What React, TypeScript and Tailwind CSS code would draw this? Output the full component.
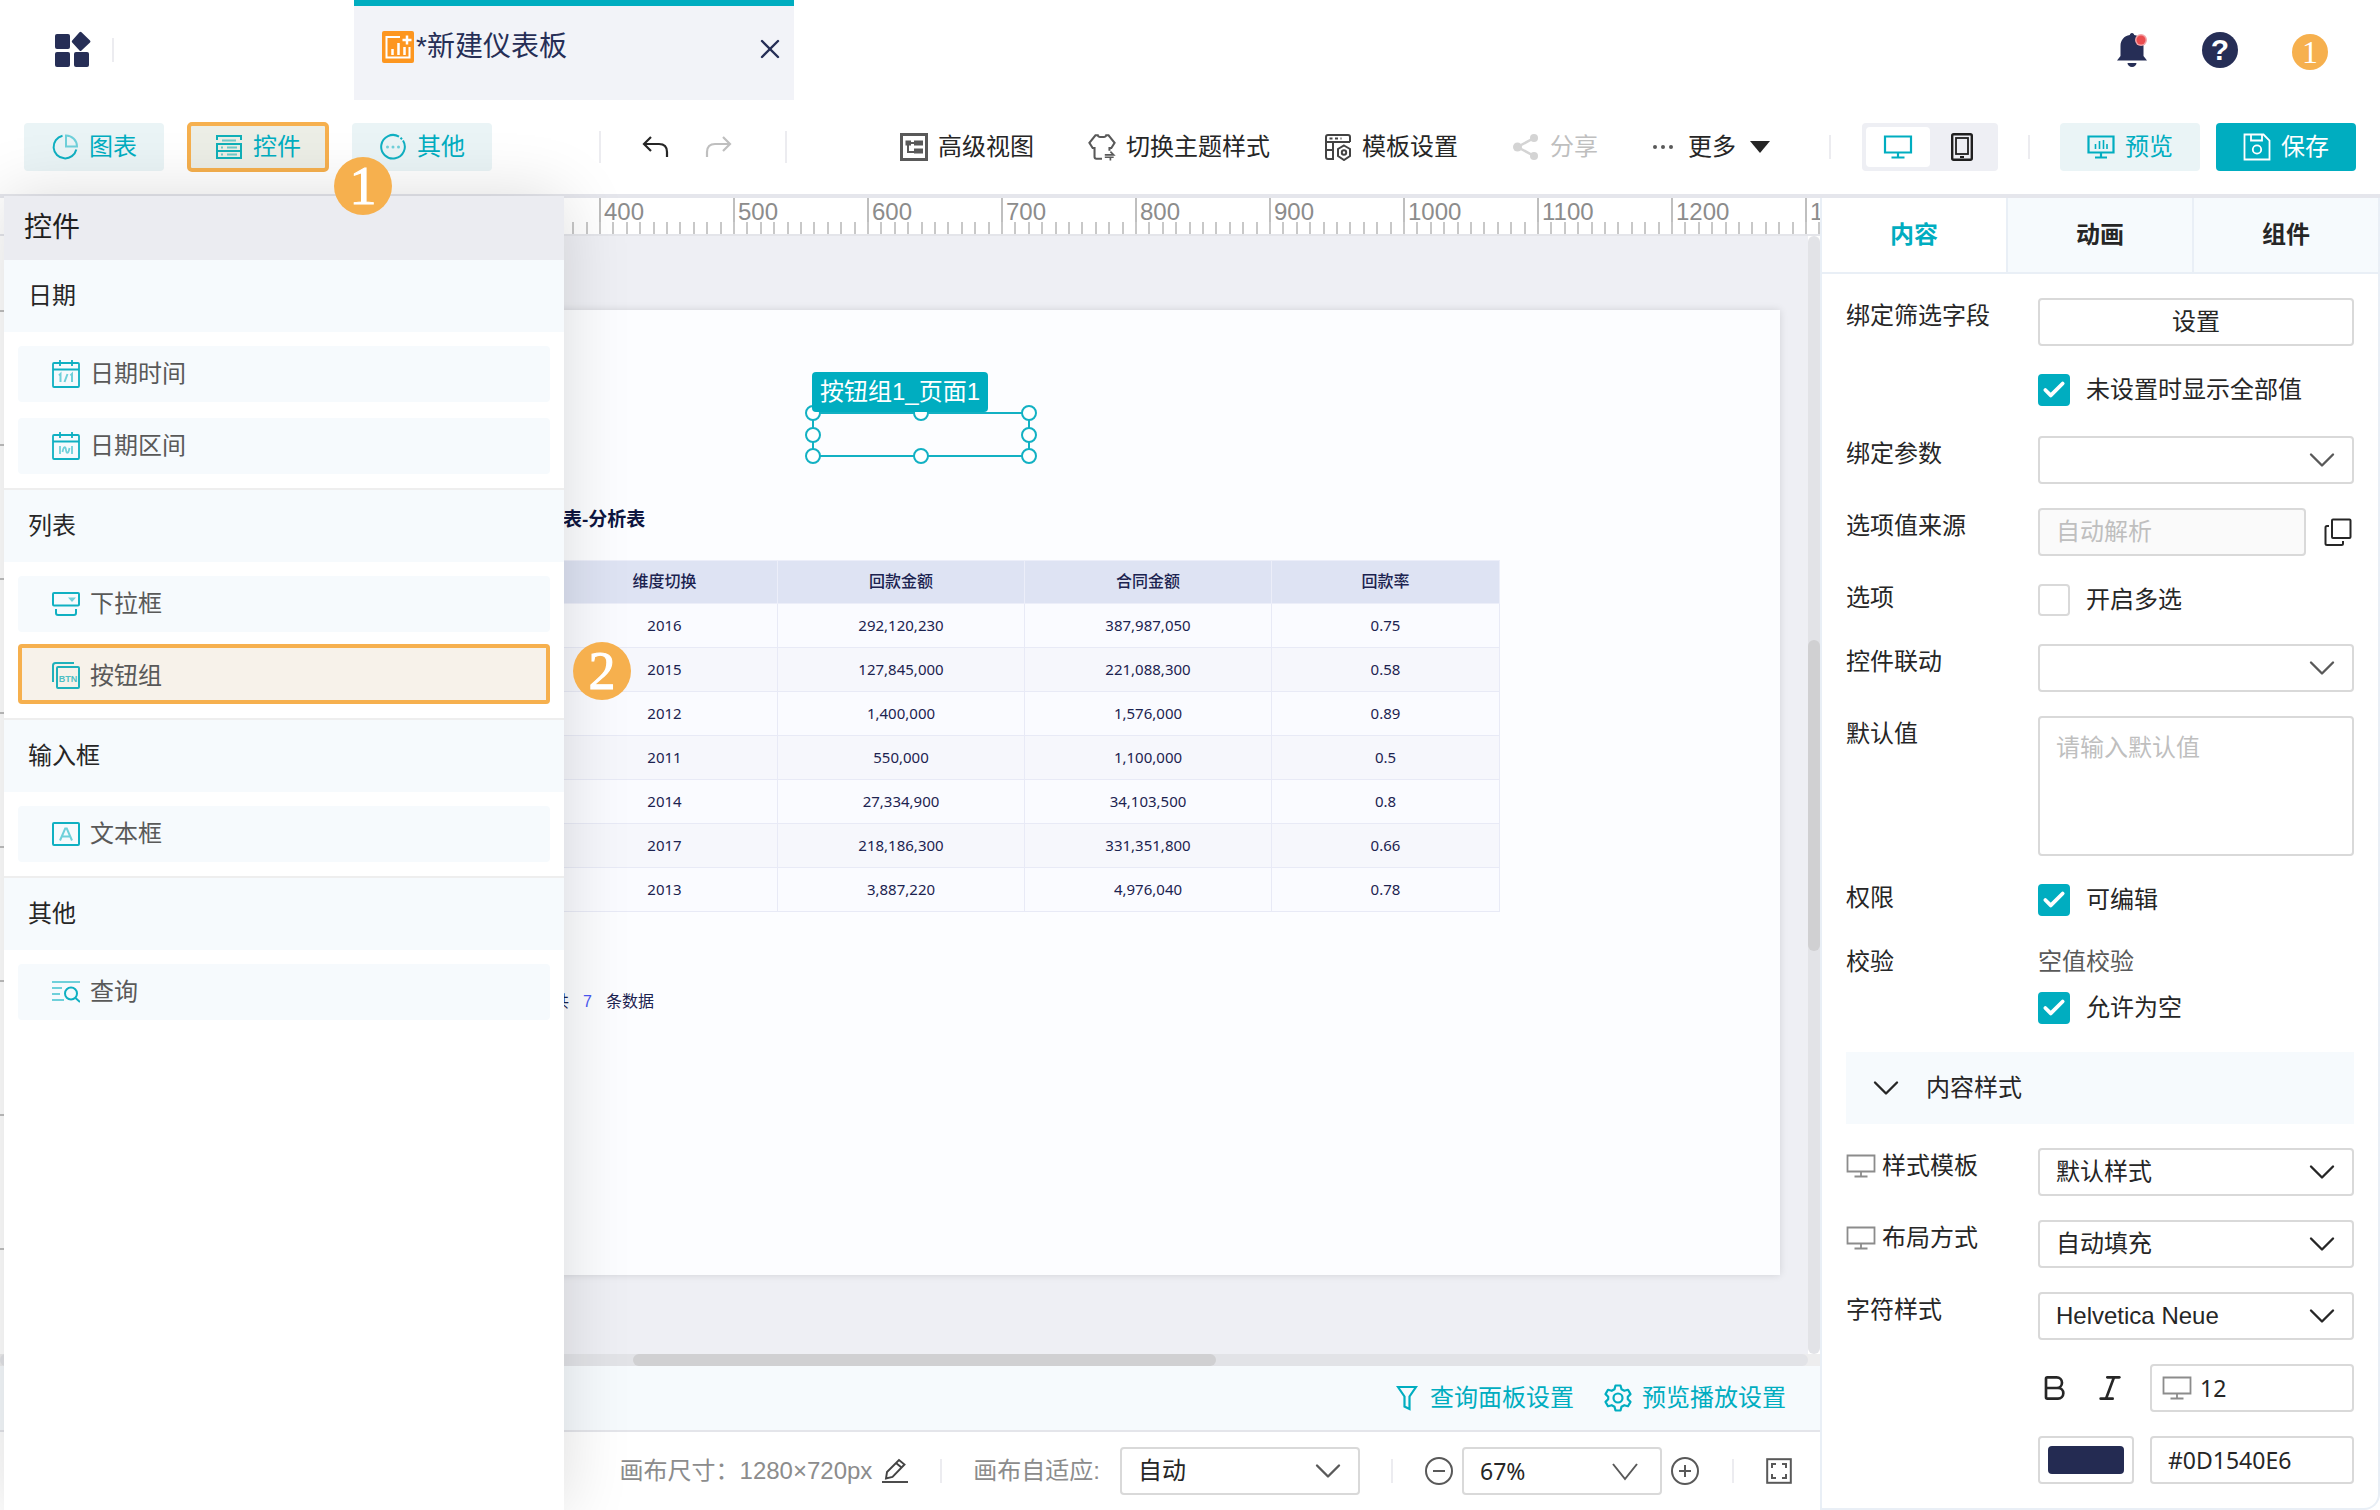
import { useState } from "react";
import type { ReactNode } from "react";
import { Bold, Check, ChevronDown, Italic, X } from "lucide-react";

const RULER_MARKS = [400, 500, 600, 700, 800, 900, 1000, 1100, 1200, 1300];
const SIDE_MARKS = [0, 100, 200, 300, 400, 500, 600, 700, 800];
const TICKS = [0, 1, 2, 3, 4, 5, 6, 7, 8, 9];

const COLUMNS = ["维度切换", "回款金额", "合同金额", "回款率"];

const ROWS = [
  ["2016", "292,120,230", "387,987,050", "0.75"],
  ["2015", "127,845,000", "221,088,300", "0.58"],
  ["2012", "1,400,000", "1,576,000", "0.89"],
  ["2011", "550,000", "1,100,000", "0.5"],
  ["2014", "27,334,900", "34,103,500", "0.8"],
  ["2017", "218,186,300", "331,351,800", "0.66"],
  ["2013", "3,887,220", "4,976,040", "0.78"],
];

const TABS = ["内容", "动画", "组件"];

/* ---------- icons ---------- */

function LogoIcon() {
  return (
    <svg width="38" height="38" viewBox="0 0 38 38" fill="#262e56">
      <rect x="1" y="3" width="15" height="15" rx="2" />
      <path d="M27.500 1.200 36 9.400q1 1 0 2L27.500 19.500q-1 1-2 0L18.200 11.400q-1-1 0-2L25.500 1.200q1-1 2 0Z" />
      <rect x="1" y="21" width="15" height="15" rx="2" />
      <rect x="20" y="21" width="15" height="15" rx="2" />
    </svg>
  );
}

function DashboardIcon() {
  return (
    <svg width="32" height="32" viewBox="0 0 32 32" fill="none">
      <rect width="32" height="32" rx="2" fill="#fd9620" />
      <path d="M18 6H4.500v20.500h23V16" stroke="#fff" strokeWidth="2" />
      <path d="M10.500 18v6M16.500 12v12M22.500 16v8" stroke="#fff" strokeWidth="2.500" />
      <path d="M25 4.500v9M20.500 9h9" stroke="#fff" strokeWidth="2.500" />
    </svg>
  );
}

function BellIcon() {
  return (
    <svg width="32" height="36" viewBox="0 0 32 36">
      <path d="M16 1c1.500 0 2 1 2.200 2C24 4 27.500 8 27.500 14v10l3.500 4.500H1L4.500 24V14C4.500 8 8 4 13.800 3c.2-1 .7-2 2.200-2Z" fill="#262e56" />
      <path d="M11.500 31h9a4.500 4 0 0 1-9 0Z" fill="#262e56" />
      <circle cx="25" cy="8" r="6" fill="#f3a3a6" />
      <circle cx="25" cy="8" r="4.500" fill="#ea4d4f" />
    </svg>
  );
}

function PieIcon() {
  return (
    <svg width="28" height="28" viewBox="0 0 28 28" fill="none" strokeWidth="2">
      <path d="M11.500 2.700A11.500 11.500 0 1 0 25.300 16.500" stroke="#10b0c2" />
      <path d="M15 2.500v11h11A11 11 0 0 0 15 2.500Z" stroke="#6fd0da" />
    </svg>
  );
}

function ControlIcon() {
  return (
    <svg width="28" height="28" viewBox="0 0 28 28" fill="none" strokeWidth="2">
      <path d="M2 7V3h24v4" stroke="#10b0b8" />
      <path d="M7 7.500h14" stroke="#6fc9c8" />
      <rect x="2" y="11" width="24" height="7" stroke="#10b0b8" />
      <path d="M2 18v7h24v-7" stroke="#10b0b8" />
      <path d="M6 14.500h2M12 14.500h10M6 21.500h2M12 21.500h10" stroke="#6fc9c8" />
    </svg>
  );
}

function OtherIcon() {
  return (
    <svg width="28" height="28" viewBox="0 0 28 28" fill="none">
      <path d="M24 7.500A11.800 11.800 0 1 1 20 3.600M21.500 4.800l1.500 1.500" stroke="#10b0c2" strokeWidth="2" />
      <circle cx="8.500" cy="14" r="1.500" fill="#6fd0da" />
      <circle cx="14" cy="14" r="1.500" fill="#6fd0da" />
      <circle cx="19.500" cy="14" r="1.500" fill="#6fd0da" />
    </svg>
  );
}

function UndoIcon({ flipped = false }: { flipped?: boolean }) {
  return (
    <svg width="28" height="24" viewBox="0 0 28 24" fill="none" stroke={flipped ? "#bfbfbf" : "#262626"} strokeWidth="2.200">
      {flipped ? <path d="M18 2l7 7-7 7M25 9H10C5 9 2 12 2 17v5" /> : <path d="M10 2 3 9l7 7M3 9h15c5 0 8 3 8 8v5" />}
    </svg>
  );
}

function AdvancedViewIcon() {
  return (
    <svg width="28" height="28" viewBox="0 0 28 28" fill="none">
      <rect x="1.500" y="1.500" width="25" height="25" stroke="#595959" strokeWidth="3" />
      <path d="M8 9v10h8M8 10h8" stroke="#595959" strokeWidth="2" />
      <path d="M5.500 7.500h5.500v5H5.500zM14 7.500h9v5h-9zM14 15.500h9v5h-9z" fill="#595959" />
    </svg>
  );
}

function ThemeIcon() {
  return (
    <svg width="28" height="28" viewBox="0 0 30 30" fill="none" stroke="#595959" strokeWidth="2.200">
      <path d="M15 27.500H9q-2 0-2-2V16H5L1.500 10.500 8 2.500h2.500c.5 2.500 8.500 2.500 9 0H22l6.500 8L25 16h-2v3" />
      <path d="M18 23.500h9.500L24 20M27.500 26h-9.500M24 26v3.500" strokeWidth="1.800" />
    </svg>
  );
}

function TemplateIcon() {
  return (
    <svg width="28" height="28" viewBox="0 0 28 28" fill="none" stroke="#434343" strokeWidth="2">
      <path d="M26 9V4q0-2-2-2H4Q2 2 2 4v20q0 2 2 2h6M2 9h24M9 9v17M2 17h8" />
      <path d="M5.500 5.500h3M11 5.500h3M16.500 5.500h1" />
      <path d="M20 12.500 26 16v7l-6 4-6-4v-7Z" />
      <circle cx="20" cy="19.500" r="2.200" />
    </svg>
  );
}

function ShareIcon() {
  return (
    <svg width="28" height="28" viewBox="0 0 28 28" fill="#d4d4d4">
      <circle cx="5.500" cy="14" r="4.500" />
      <circle cx="22" cy="5" r="4" />
      <circle cx="22" cy="23" r="4" />
      <path d="M22 5 5.500 14 22 23" fill="none" stroke="#d4d4d4" strokeWidth="2.500" />
    </svg>
  );
}

function DotsIcon() {
  return (
    <svg width="22" height="8" viewBox="0 0 22 8" fill="#595959">
      <circle cx="3" cy="4" r="2" />
      <circle cx="11" cy="4" r="2" />
      <circle cx="19" cy="4" r="2" />
    </svg>
  );
}

function MonitorIcon() {
  return (
    <svg width="30" height="26" viewBox="0 0 30 26" fill="none" stroke="#00adc0" strokeWidth="2.200">
      <path d="M2 2.500h26v16H2zM15 19v4M8.500 23.500h13" />
    </svg>
  );
}

function PhoneIcon() {
  return (
    <svg width="22" height="28" viewBox="0 0 22 28" fill="none" stroke="#1f1f1f">
      <rect x="1.200" y="1.200" width="19.600" height="25.600" rx="1.500" strokeWidth="2.400" />
      <rect x="5" y="5" width="12" height="16" strokeWidth="1.800" />
      <path d="M9 24h4" strokeWidth="2" />
    </svg>
  );
}

function PreviewIcon() {
  return (
    <svg width="28" height="26" viewBox="0 0 28 26" fill="none" stroke="#00adc0" strokeWidth="2.200">
      <path d="M1.500 2.500h25v16h-25zM14 19v4M8 23.500h12" />
      <path d="M8.500 10v5M12.500 7v8M16.500 6v9M20 10v5" strokeWidth="1.600" />
    </svg>
  );
}

function SaveIcon() {
  return (
    <svg width="28" height="28" viewBox="0 0 28 28" fill="none" stroke="#fff" strokeWidth="1.800">
      <path d="M1.500 1.500h19l6 6v19h-25Z" />
      <path d="M8 1.500v6h11v-6" />
      <circle cx="14" cy="16.500" r="4.200" />
    </svg>
  );
}

function CalendarIcon({ range = false }: { range?: boolean }) {
  return (
    <svg width="28" height="28" viewBox="0 0 28 28" fill="none" stroke="#10b0c2" strokeWidth="1.800">
      <rect x="1" y="3" width="26" height="24" rx="1" />
      <path d="M1 9.500h26M8 0v6M20 0v6" />
      {range ? (
        <path d="M8 14v8M20 14v8M10.500 20c1-6 3-6 3.500-2s2.500 4 3.500-2" stroke="#6fd0da" strokeWidth="1.800" />
      ) : (
        <path d="M7 15.500l1.500-1.500v8M18.500 15.500l1.500-1.500v8M15.500 14l-3 8" stroke="#6fd0da" strokeWidth="2" />
      )}
    </svg>
  );
}

function DropdownIcon() {
  return (
    <svg width="28" height="28" viewBox="0 0 28 28" fill="none" stroke="#10b0c2" strokeWidth="2">
      <rect x="1" y="3" width="26" height="12.500" rx="1" />
      <path d="M4 19v4q0 2 2 2h16q2 0 2-2v-4" />
      <path d="M16 7.500h8l-4 4.500Z" fill="#6fd0da" stroke="none" />
    </svg>
  );
}

function ButtonGroupIcon() {
  return (
    <svg width="28" height="28" viewBox="0 0 28 28" fill="none" stroke="#1fb1bb" strokeWidth="2">
      <path d="M1 20V3.500Q1 1 3.500 1H22" />
      <rect x="5" y="5" width="22" height="21" rx="1" />
      <text x="16" y="19.500" textAnchor="middle" fontSize="9" fontWeight="700" fontFamily="Liberation Sans, sans-serif" fill="#4fbfc4" stroke="none">
        BTN
      </text>
    </svg>
  );
}

function TextBoxIcon() {
  return (
    <svg width="28" height="28" viewBox="0 0 28 28" fill="none" stroke="#10b0c2" strokeWidth="2">
      <rect x="1" y="3" width="26" height="22" rx="1" />
      <path d="M8 20.500 13.200 8.500h1.600L20 20.500M9.800 16.500h8.400" stroke="#6fd0da" />
    </svg>
  );
}

function QueryIcon() {
  return (
    <svg width="28" height="28" viewBox="0 0 28 28" fill="none" strokeWidth="2">
      <path d="M0 4h28M0 10h10M0 16h8M0 22h12" stroke="#6fd0da" />
      <circle cx="19" cy="15.500" r="6" stroke="#10b0c2" />
      <path d="M23.500 20 28 24" stroke="#10b0c2" />
    </svg>
  );
}

function SmallMonitorIcon() {
  return (
    <svg width="30" height="24" viewBox="0 0 30 24" fill="none" stroke="#8c8c8c" strokeWidth="1.800" className="shrink-0">
      <path d="M1.500 1.500h27v16h-27zM15 18v4M8.500 22.500h13" />
    </svg>
  );
}

function CopyIcon() {
  return (
    <svg width="28" height="28" viewBox="0 0 28 28" fill="none" stroke="#262626" strokeWidth="2">
      <rect x="8" y="1.500" width="18.500" height="18.500" rx="1" />
      <path d="M5 8H3q-1.500 0-1.500 1.500v16Q1.500 27 3 27h14.500q1.500 0 1.500-1.500V23" />
    </svg>
  );
}

function FilterIcon() {
  return (
    <svg width="22" height="26" viewBox="0 0 22 26" fill="none" stroke="#00adc0" strokeWidth="2.200">
      <path d="M2 2h18l-6.500 9.500V24l-5-2.500v-10Z" />
    </svg>
  );
}

function GearIcon() {
  return (
    <svg width="28" height="28" viewBox="0 0 28 28" fill="none" stroke="#00adc0" strokeWidth="2.200">
      <path d="M11.500 1.500h5l1 3.700 2.800 1.600 3.700-1 2.500 4.300-2.700 2.700v2.400l2.700 2.700-2.500 4.300-3.700-1-2.800 1.600-1 3.700h-5l-1-3.700-2.800-1.600-3.700 1-2.500-4.300 2.700-2.700v-2.400L1.500 10.100 4 5.800l3.700 1 2.800-1.600Z" strokeLinejoin="round" />
      <circle cx="14" cy="14" r="4.500" />
    </svg>
  );
}

function PencilIcon() {
  return (
    <svg width="26" height="26" viewBox="0 0 26 26" fill="none" stroke="#434343" strokeWidth="1.900">
      <path d="M4 20.500 5 14 17 2l5.500 4.500L10.500 19ZM14 5l5.500 4.500" />
      <path d="M0 24h26" />
    </svg>
  );
}

function ZoomIcon({ plus = false }: { plus?: boolean }) {
  return (
    <svg width="30" height="30" viewBox="0 0 30 30" fill="none" stroke="#595959" strokeWidth="2">
      <circle cx="15" cy="15" r="13" />
      <path d={plus ? "M9 15h12M15 9v12" : "M9 15h12"} />
    </svg>
  );
}

function FullscreenIcon() {
  return (
    <svg width="26" height="26" viewBox="0 0 26 26" fill="none" stroke="#595959" strokeWidth="2">
      <rect x="1.200" y="1.200" width="23.600" height="23.600" />
      <path d="M6 10V6h4M16 6h4v4M20 16v4h-4M10 20H6v-4" />
    </svg>
  );
}

/* ---------- small parts ---------- */

function StepBadge({ n, className }: { n: number; className: string }) {
  return (
    <span
      className={`absolute z-30 flex h-[58px] w-[58px] items-center justify-center rounded-full bg-[#f6b04e] font-['Liberation_Serif',serif] text-[54px] leading-none text-white [-webkit-text-stroke:1px_white] ${className}`}
    >
      {n}
    </span>
  );
}

function Divider() {
  return <span className="h-6 w-0.5 bg-[#ececf0]" />;
}

function VeeIcon() {
  return (
    <svg width="26" height="18" viewBox="0 0 26 18" fill="none" stroke="#595959" strokeWidth="2" className="pointer-events-none absolute top-4 right-6">
      <path d="M1 1l12 15L25 1" />
    </svg>
  );
}

type SelectProps = {
  id: string;
  value: string;
  className?: string;
  font?: string;
  label?: string;
  color?: string;
  icon?: ReactNode;
};

function SelectBox({ id, value, className = "w-full", font = "", label, color = "text-[#262626]", icon }: SelectProps) {
  return (
    <div className={`relative h-12 ${className}`}>
      <select
        id={id}
        aria-label={label}
        defaultValue={value}
        className={`h-full w-full appearance-none rounded-sm border-2 border-[#d9d9d9] bg-white px-4 text-[#262626] ${font}`}
      >
        <option value={value}>{value}</option>
      </select>
      {icon ?? <ChevronDown size={44} strokeWidth={1.3} className={`pointer-events-none absolute top-0.5 right-2.5 ${color}`} />}
    </div>
  );
}

function CheckRow({ id, text, checked = false }: { id: string; text: string; checked?: boolean }) {
  const [on, setOn] = useState(checked);
  return (
    <div className="flex h-10 items-center gap-4">
      <span className="relative h-8 w-8">
        <input
          id={id}
          type="checkbox"
          checked={on}
          onChange={(e) => setOn(e.target.checked)}
          className="block h-8 w-8 appearance-none rounded-sm border-2 border-[#d9d9d9] bg-white checked:border-[#00adc0] checked:bg-[#00adc0]"
        />
        {on && <Check size={26} strokeWidth={3.5} className="pointer-events-none absolute top-[3px] left-[3px] text-white" />}
      </span>
      <label htmlFor={id}>{text}</label>
    </div>
  );
}

type FieldProps = { label: string; htmlFor?: string; monitor?: boolean; children: ReactNode };

function Field({ label, htmlFor, monitor = false, children }: FieldProps) {
  return (
    <div className="flex">
      <label htmlFor={htmlFor} className="flex h-9 w-48 shrink-0 items-center gap-1.5">
        {monitor && <SmallMonitorIcon />}
        {label}
      </label>
      <div className="min-w-0 flex-1">{children}</div>
    </div>
  );
}

function ToolButton({ icon, text, color = "text-[#262626]" }: { icon: ReactNode; text: string; color?: string }) {
  return (
    <button className={`flex items-center gap-2.5 whitespace-nowrap ${color}`}>
      {icon}
      {text}
    </button>
  );
}

function AddButton({ icon, text, active = false }: { icon: ReactNode; text: string; active?: boolean }) {
  return (
    <button
      className={`flex h-12 w-[140px] items-center justify-center gap-2.5 rounded-sm text-[#00adc0] ${
        active ? "bg-[#eceee6] outline-4 -outline-offset-3 outline-[#f6b04e]" : "bg-[#eaf4f6]"
      }`}
    >
      {icon}
      {text}
    </button>
  );
}

function WidgetItem({ icon, text, step }: { icon: ReactNode; text: string; step?: number }) {
  return (
    <div className={`relative ${step ? "-mt-1" : ""}`}>
      <button
        className={`flex w-full items-center gap-2.5 rounded px-[34px] text-[#595959] ${
          step ? "h-[60px] bg-[#f7f2ea] pt-1 outline-4 -outline-offset-4 outline-[#f6b04e]" : "h-14 bg-[#f6fafd]"
        }`}
      >
        {icon}
        {text}
      </button>
      {step && <StepBadge n={step} className="-top-0.5 left-[555px]" />}
    </div>
  );
}

function WidgetGroup({ title, first = false, children }: { title: string; first?: boolean; children: ReactNode }) {
  return (
    <section className={first ? "" : "border-t-2 border-[#eeeeee]"}>
      <h3 className="flex h-[72px] items-center bg-[#f6fafd] px-6 text-[#262626]">{title}</h3>
      <div className="flex flex-col gap-4 px-3.5 py-3.5">{children}</div>
    </section>
  );
}

function Handle({ className }: { className: string }) {
  return <span className={`absolute h-4 w-4 rounded-full border-2 border-[#12b1c3] bg-white ${className}`} />;
}

/* ---------- regions ---------- */

function Header() {
  return (
    <header className="flex h-[100px] items-center">
      <div className="flex w-[354px] items-center gap-5 pl-[54px]">
        <LogoIcon />
        <Divider />
      </div>
      <div className="flex h-full w-[440px] items-center gap-0.5 border-t-6 border-[#00adc0] bg-[#f2f3f8] pr-2 pb-3 pl-7">
        <DashboardIcon />
        <span className="text-[28px] text-[#262e56]">*新建仪表板</span>
        <button aria-label="关闭" className="ml-auto pt-1 text-[#262e56]">
          <X size={32} strokeWidth={1.8} />
        </button>
      </div>
      <div className="ml-auto flex items-center gap-[54px] pr-[52px]">
        <button aria-label="通知">
          <BellIcon />
        </button>
        <button aria-label="帮助" className="flex h-9 w-9 items-center justify-center rounded-full bg-[#262e56] text-[30px] leading-none font-bold text-white">
          ?
        </button>
        <span className="mt-1 flex h-9 w-9 items-center justify-center rounded-full bg-[#f6b04e] font-['Liberation_Serif',serif] text-[32px] leading-none text-white">
          1
        </span>
      </div>
    </header>
  );
}

function Toolbar() {
  return (
    <div className="flex h-[94px] items-center px-6">
      <div className="flex gap-6">
        <AddButton icon={<PieIcon />} text="图表" />
        <div className="relative">
          <AddButton icon={<ControlIcon />} text="控件" active />
          <StepBadge n={1} className="top-[34px] left-[146px]" />
        </div>
        <AddButton icon={<OtherIcon />} text="其他" />
      </div>
      <div className="ml-[107px] flex items-center">
        <span className="h-8 w-0.5 bg-[#ececf0]" />
        <button aria-label="撤销" className="ml-10">
          <UndoIcon />
        </button>
        <button aria-label="重做" disabled className="ml-9">
          <UndoIcon flipped />
        </button>
        <span className="ml-[52px] h-8 w-0.5 bg-[#ececf0]" />
      </div>
      <div className="ml-[113px] flex items-center gap-[54px]">
        <ToolButton icon={<AdvancedViewIcon />} text="高级视图" />
        <ToolButton icon={<ThemeIcon />} text="切换主题样式" />
        <ToolButton icon={<TemplateIcon />} text="模板设置" />
        <ToolButton icon={<ShareIcon />} text="分享" color="text-[#bfbfbf]" />
        <button className="flex items-center gap-3.5 whitespace-nowrap text-[#262626]">
          <DotsIcon />
          更多
          <svg width="20" height="12" viewBox="0 0 20 12" fill="#262626">
            <path d="M0 0h20L10 12Z" />
          </svg>
        </button>
      </div>
      <div className="ml-auto flex items-center">
        <Divider />
        <div className="ml-[31px] flex h-12 w-[136px] items-center rounded bg-[#eeeff4] p-1">
          <button aria-label="电脑端" className="flex h-10 w-16 items-center justify-center rounded-sm bg-white">
            <MonitorIcon />
          </button>
          <button aria-label="移动端" className="flex h-10 w-16 items-center justify-center">
            <PhoneIcon />
          </button>
        </div>
        <span className="ml-[30px] h-6 w-0.5 bg-[#ececf0]" />
        <button className="ml-[30px] flex h-12 w-[140px] items-center justify-center gap-2.5 rounded bg-[#eaf4f6] text-[#00adc0]">
          <PreviewIcon />
          预览
        </button>
        <button className="ml-4 flex h-12 w-[140px] items-center justify-center gap-2.5 rounded bg-[#00adc0] text-white">
          <SaveIcon />
          保存
        </button>
      </div>
    </div>
  );
}

function WidgetPanel() {
  return (
    <aside className="absolute -top-0.5 bottom-0 left-1 z-20 w-[560px] bg-white shadow-[0_0_64px_rgba(0,0,0,0.14)]">
      <h2 className="flex h-16 items-center bg-[#ebecf1] px-5 text-[28px] text-[#1f1f1f]">控件</h2>
      <WidgetGroup title="日期" first>
        <WidgetItem icon={<CalendarIcon />} text="日期时间" />
        <WidgetItem icon={<CalendarIcon range />} text="日期区间" />
      </WidgetGroup>
      <WidgetGroup title="列表">
        <WidgetItem icon={<DropdownIcon />} text="下拉框" />
        <WidgetItem icon={<ButtonGroupIcon />} text="按钮组" step={2} />
      </WidgetGroup>
      <WidgetGroup title="输入框">
        <WidgetItem icon={<TextBoxIcon />} text="文本框" />
      </WidgetGroup>
      <WidgetGroup title="其他">
        <WidgetItem icon={<QueryIcon />} text="查询" />
      </WidgetGroup>
    </aside>
  );
}

function Ruler() {
  return (
    <div className="flex h-[38px] overflow-hidden border-b-2 border-[#e4e5ea] bg-white pl-[465px]">
      {/* unlabelled stretch that starts under the widget panel */}
      <span className="flex w-[134px] shrink-0 items-end">
        {TICKS.map((t) => (
          <i key={t} className="h-3 flex-1 border-l-2 border-[#c8c8c8]" />
        ))}
      </span>
      {RULER_MARKS.map((m) => (
        <div key={m} className="flex w-[134px] shrink-0 flex-col border-l-2 border-[#bfbfbf]">
          <span className="-mb-1 h-7 shrink-0 pl-[3px] leading-7 text-[#8c8c8c]">{m}</span>
          <span className="-ml-0.5 flex h-3">
            {TICKS.map((t) => (
              <i key={t} className="flex-1 border-l-2 border-[#c8c8c8]" />
            ))}
          </span>
        </div>
      ))}
    </div>
  );
}

function Canvas() {
  return (
    <div className="flex flex-1">
      <div className="relative min-w-0 flex-1 overflow-hidden bg-[#eeeff4]">
        <div className="absolute inset-y-0 left-0 w-9 overflow-hidden border-r-2 border-[#e4e5ea] bg-white pt-[74px]">
          {SIDE_MARKS.map((m) => (
            <i key={m} className="block h-[134px] border-t-2 border-[#bfbfbf]" />
          ))}
        </div>
        {/* Page being edited: 1280x720 at the current zoom */}
        <div className="absolute top-[74px] left-16 h-[965px] w-[1716px] bg-[#fcfdff] shadow-[0_0_8px_rgba(0,0,0,0.12)]">
          <div className="absolute top-[102px] left-[748px] h-[45px] w-[218px] border-2 border-[#12b1c3]">
            <Handle className="-top-[9px] -left-[9px]" />
            <Handle className="-top-[9px] left-[99px]" />
            <Handle className="-top-[9px] -right-[9px]" />
            <Handle className="top-[13px] -left-[9px]" />
            <Handle className="top-[13px] -right-[9px]" />
            <Handle className="-bottom-[9px] -left-[9px]" />
            <Handle className="-bottom-[9px] left-[99px]" />
            <Handle className="-right-[9px] -bottom-[9px]" />
            <span className="absolute bottom-[43px] -left-0.5 flex h-10 items-center rounded bg-[#00adc0] px-2 whitespace-nowrap text-white">
              按钮组1_页面1
            </span>
          </div>
          <div className="absolute top-[194px] left-[487px] w-[948px] text-base text-[#1c2350]">
            <h4 className="flex h-8 items-center pl-3 text-[19px] font-bold text-[#0d1540]">表-分析表</h4>
            <table className="mt-6 w-full table-fixed border-collapse text-center">
              <colgroup>
                <col className="w-[226px]" />
                <col className="w-[247px]" />
                <col className="w-[247px]" />
                <col className="w-[228px]" />
              </colgroup>
              <thead>
                <tr className="h-[43px] bg-[#dee3f3]">
                  {COLUMNS.map((c) => (
                    <th key={c} className="border border-[#eceef9] font-medium">
                      {c}
                    </th>
                  ))}
                </tr>
              </thead>
              <tbody className="font-['Noto_Sans',sans-serif] text-[15px]">
                {ROWS.map((row) => (
                  <tr key={row[0]} className="h-11 bg-[#fafbff] even:bg-[#f6f7fc]">
                    {row.map((cell, i) => (
                      <td key={i} className="border border-[#e8eaf6]">
                        {cell}
                      </td>
                    ))}
                  </tr>
                ))}
              </tbody>
            </table>
            <p className="mt-[78px] flex items-center gap-3.5 pl-0.5">
              <span>共</span>
              <span className="text-[#4a58f5]">7</span>
              <span>条数据</span>
            </p>
          </div>
        </div>
      </div>
      <div className="flex w-3 flex-col rounded-full bg-[#e2e3e7]">
        <div className="mt-[404px] h-[311px] rounded-full bg-[#d0d0d2]" />
      </div>
    </div>
  );
}

function Workspace() {
  return (
    <main className="flex min-w-0 flex-1 flex-col">
      <Ruler />
      <Canvas />
      <div className="bg-[#ededee] pr-3">
        <div className="h-3 rounded-full bg-[#e2e3e7]">
          <div className="ml-[633px] h-3 w-[583px] rounded-full bg-[#d0d0d2]" />
        </div>
      </div>
      <div className="flex h-16 items-center justify-end gap-[30px] bg-[#f6fafd] pr-[34px]">
        <button className="flex items-center gap-3 text-[#00adc0]">
          <FilterIcon />
          查询面板设置
        </button>
        <button className="flex items-center gap-2.5 text-[#00adc0]">
          <GearIcon />
          预览播放设置
        </button>
      </div>
      <div className="flex h-20 items-center justify-end border-t-2 border-[#e4e5ea] bg-white pr-7 text-[#8c8c8c]">
        <span>画布尺寸：</span>
        <span>1280×720px</span>
        <button aria-label="编辑画布尺寸" className="mr-8 ml-2.5">
          <PencilIcon />
        </button>
        <Divider />
        <label htmlFor="fit" className="mr-5 ml-[31px]">
          画布自适应:
        </label>
        <SelectBox id="fit" value="自动" className="mr-[31px] w-60" color="text-[#595959]" />
        <Divider />
        <button aria-label="缩小" className="mr-2 ml-[31px]">
          <ZoomIcon />
        </button>
        <SelectBox id="zoom" label="缩放" value="67%" className="mr-2 w-[200px]" font="font-['Noto_Sans',sans-serif] text-[23px]" icon={<VeeIcon />} />
        <button aria-label="放大" className="mr-8">
          <ZoomIcon plus />
        </button>
        <Divider />
        <button aria-label="全屏" className="ml-8">
          <FullscreenIcon />
        </button>
      </div>
    </main>
  );
}

function Inspector() {
  const [tab, setTab] = useState("内容");
  const box = "h-12 rounded-sm border-2 border-[#d9d9d9]";

  return (
    <aside className="flex w-[560px] shrink-0 flex-col rounded-br-2xl border-2 border-t-0 border-[#e9eff6] bg-white text-[#262626]">
      <div className="flex h-[76px] border-b-2 border-[#e9eff6]">
        {TABS.map((t) => (
          <button
            key={t}
            onClick={() => setTab(t)}
            className={`flex-1 border-r-2 border-[#e9eff6] font-bold last:border-r-0 ${tab === t ? "bg-white text-[#00adc0]" : "bg-[#f6fafd]"}`}
          >
            {t}
          </button>
        ))}
      </div>
      <div className="flex flex-col gap-6 px-6 pt-6 pb-5">
        <Field label="绑定筛选字段" htmlFor="bind-field">
          <div className="flex flex-col gap-6 pb-0.5">
            <button id="bind-field" className={`${box} w-full`}>
              设置
            </button>
            <CheckRow id="show-all" text="未设置时显示全部值" checked />
          </div>
        </Field>
        <Field label="绑定参数" htmlFor="bind-param">
          <SelectBox id="bind-param" value="" color="text-[#595959]" />
        </Field>
        <Field label="选项值来源" htmlFor="source">
          <div className="flex items-center gap-[18px] pr-0.5">
            <input id="source" disabled placeholder="自动解析" className={`${box} min-w-0 flex-1 bg-[#fafafa] px-4 placeholder:text-[#bfbfbf]`} />
            <button aria-label="复制">
              <CopyIcon />
            </button>
          </div>
        </Field>
        <Field label="选项">
          <CheckRow id="multi" text="开启多选" />
        </Field>
        <Field label="控件联动" htmlFor="link">
          <SelectBox id="link" value="" color="text-[#595959]" />
        </Field>
        <Field label="默认值" htmlFor="default-value">
          <textarea
            id="default-value"
            placeholder="请输入默认值"
            className="block h-[140px] w-full resize-none rounded-sm border-2 border-[#d9d9d9] px-4 py-3.5 placeholder:text-[#bfbfbf]"
          />
        </Field>
        <Field label="权限">
          <CheckRow id="editable" text="可编辑" checked />
        </Field>
        <Field label="校验">
          <p className="mb-2 flex h-9 items-center text-[#595959]">空值校验</p>
          <CheckRow id="allow-empty" text="允许为空" checked />
        </Field>
        <button className="flex h-[72px] items-center gap-[18px] bg-[#f6fafd] px-[18px]">
          <ChevronDown size={44} strokeWidth={1.3} />
          内容样式
        </button>
        <Field label="样式模板" htmlFor="style-template" monitor>
          <SelectBox id="style-template" value="默认样式" />
        </Field>
        <Field label="布局方式" htmlFor="layout" monitor>
          <SelectBox id="layout" value="自动填充" />
        </Field>
        <Field label="字符样式" htmlFor="font">
          <SelectBox id="font" value="Helvetica Neue" />
        </Field>
        <div className="flex items-center pl-48">
          <button aria-label="加粗" className="w-14">
            <Bold size={32} strokeWidth={2} />
          </button>
          <button aria-label="斜体" className="w-14">
            <Italic size={32} strokeWidth={2} />
          </button>
          <div className={`${box} flex min-w-0 flex-1 items-center gap-2 pl-2.5`}>
            <SmallMonitorIcon />
            <input aria-label="字号" defaultValue="12" className="w-full min-w-0 font-['Noto_Sans',sans-serif] text-[23px] outline-none" />
          </div>
        </div>
        <div className="flex items-center gap-4 pl-48">
          <button aria-label="颜色" className={`${box} w-24 p-2`}>
            <span className="block h-full rounded-sm bg-[#242b52]" />
          </button>
          <input aria-label="颜色值" defaultValue="#0D1540E6" className={`${box} min-w-0 flex-1 px-4 font-['Noto_Sans',sans-serif] text-[23px]`} />
        </div>
      </div>
    </aside>
  );
}

export default function App() {
  return (
    <div className="flex min-h-screen flex-col bg-white font-['Liberation_Sans','Noto_Sans_CJK_SC',sans-serif] text-2xl leading-8">
      <Header />
      <Toolbar />
      <div className="relative flex flex-1 border-t-4 border-[#e5e6ec]">
        <WidgetPanel />
        <Workspace />
        <Inspector />
      </div>
    </div>
  );
}
